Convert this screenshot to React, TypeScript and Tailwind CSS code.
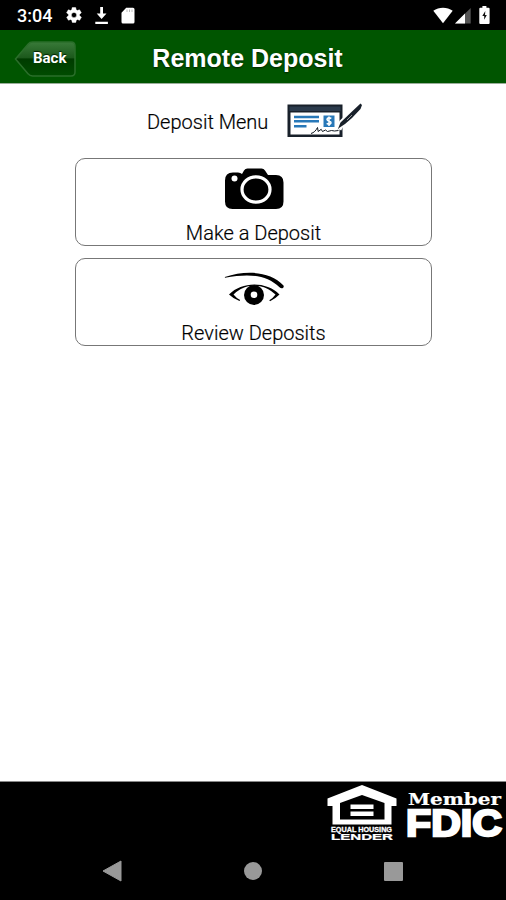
import type { ReactNode } from "react";

function StatusBar() {
  return (
    <div className="h-[30px] bg-black flex items-center text-white">
      <span className="ml-[17px] w-[48px] mt-[1px] font-['Roboto'] font-medium text-[18px] leading-none">3:04</span>
      {/* Settings */}
      <svg className="w-[18px] h-[18px]" viewBox="0 0 24 24" fill="#fff" stroke="#fff" strokeWidth=".6">
        <path d="M19.4 13c.04-.3.06-.65.06-1s-.02-.7-.07-1l2.1-1.6a.5.5 0 0 0 .1-.65l-2-3.45a.5.5 0 0 0-.6-.22l-2.5 1a7.4 7.4 0 0 0-1.7-.98l-.37-2.65a.5.5 0 0 0-.5-.42h-4a.5.5 0 0 0-.5.42l-.37 2.65c-.6.24-1.17.57-1.7.98l-2.5-1a.5.5 0 0 0-.6.22l-2 3.45a.5.5 0 0 0 .12.64L4.6 11a8 8 0 0 0 0 2l-2.1 1.6a.5.5 0 0 0-.12.65l2 3.45c.12.22.39.3.6.22l2.5-1c.52.4 1.08.74 1.7.98l.37 2.65c.04.24.25.42.5.42h4c.25 0 .46-.18.5-.42l.37-2.65a7.4 7.4 0 0 0 1.7-.98l2.5 1c.22.08.48 0 .6-.22l2-3.45a.5.5 0 0 0-.12-.64zM12 15.5a3.5 3.5 0 1 1 0-7 3.5 3.5 0 0 1 0 7z" />
      </svg>
      {/* Download */}
      <svg className="ml-[12px] mt-[2px] w-[14px] h-[18px]" viewBox="0 0 14 18" fill="#fff">
        <path d="M5.200 0h2.800v6.500h3.500L6.600 12 1.700 6.500h3.500zM.3 14.700h12.600v2.300H.3z" />
      </svg>
      {/* SD card */}
      <svg className="ml-[12px] mt-[1px] w-[14px] h-[17px]" viewBox="0 0 14 17">
        <path d="M5.200.8H12a1.500 1.500 0 0 1 1.500 1.500V15a1.500 1.500 0 0 1-1.500 1.500H2A1.500 1.500 0 0 1 .5 15V5.700z" fill="#fff" />
        <path d="M6 2.500v2.500M8.500 2.500v2.500M11 2.500v2.500" stroke="#aaa" strokeWidth=".8" />
      </svg>
      <div className="ml-auto mr-[16px] flex items-center">
        <svg className="w-[20px] h-[17px]" viewBox="0 0 20 17">
          <path d="M.3 3.700C6-.3 14-.3 19.700 3.700L10 16.300z" fill="#fff" />
        </svg>
        <svg className="ml-[2px] w-[16px] h-[17px]" viewBox="0 0 16 17">
          <path d="M0 16.500 15.700 1v15.500z" fill="#555" />
          <path d="M0 16.500 10 6.600v9.900z" fill="#fff" />
        </svg>
        <svg className="ml-[8px] w-[11px] h-[18px]" viewBox="0 0 11 18">
          <path d="M3.400 0h4v1.800h2.200q1 0 1 1V17q0 1-1 1H1.300q-1 0-1-1V2.800q0-1 1-1h2.100z" fill="#fff" />
          <path d="M6.300 5 3.300 10h1.900v3.800L7.800 9H6z" fill="#111" />
        </svg>
      </div>
    </div>
  );
}

function Header() {
  return (
    <header className="relative h-[54px] bg-[#005500] border-b border-b-[#9aae9a] flex items-center justify-center">
      {/* Arrow shaped back button */}
      <button className="absolute left-[14px] top-[11px] w-[63px] h-[37px]">
        <svg className="absolute inset-0" width="63" height="37" viewBox="0 0 63 37">
          <defs>
            <linearGradient id="gloss" x1="0" y1="0" x2="0" y2="1">
              <stop offset="0" stopColor="#397a39" />
              <stop offset=".46" stopColor="#1c591c" />
              <stop offset=".5" stopColor="#003b00" />
              <stop offset="1" stopColor="#004c00" />
            </linearGradient>
          </defs>
          <path d="M1.500 18 14 3.200Q15.800 1 18.500 1H57q4 0 4 4v26q0 4-4 4H18.500q-2.700 0-4.500-2.200z" fill="url(#gloss)" stroke="#2a6e2a" strokeWidth="1.500" />
        </svg>
        <span className="absolute left-[19px] top-[8px] font-['Roboto'] font-bold text-[15px] leading-[18px] text-white [text-shadow:0_-1px_1px_#002000]">
          Back
        </span>
      </button>
      <h1 className="mr-[11px] mt-[4px] font-['Liberation_Sans'] font-bold text-[25px] leading-none text-white whitespace-nowrap [text-shadow:0_1px_2px_#002000]">
        Remote Deposit
      </h1>
    </header>
  );
}

function CheckIcon() {
  return (
    <svg className="w-[76px] h-[36px]" viewBox="0 0 76 36">
      <path d="M.5 2.500h55V35H.5z" fill="#18202a" />
      <path d="M2.500 4.500h51v4.500h-51z" fill="#2b3a4c" />
      <path d="M3.500 10.500h49v22h-49z" fill="#fff" />
      <path d="M7 15h25M7 19.300h25M7 24.200h12.500" stroke="#2878b8" strokeWidth="2.500" />
      <path d="M36.500 13.500h11v11.500h-11z" fill="#2878b8" />
      <path d="M44.300 16.500q-2.300-1.500-3.800-.2c-1.300 1.400.2 2.300 1.500 2.700 1.700.5 2.800 1.700 1.300 2.900-1.200.8-2.500.3-3.600-.5M42 14.500v9.500" fill="none" stroke="#fff" strokeWidth="1.500" />
      <path d="M24 31.500c3-.8 5-3 6.500-6l.7 4 3-2.200 1.300 2.200 3-1.500 2 1.500 4-1 3 .5 4-.5" fill="none" stroke="#111820" strokeWidth="1" />
      <path d="M51.500 27 55 20.500 66 10" fill="none" stroke="#fff" strokeWidth="6" />
      <path d="m50.500 28 3-7.500L65 9.500l8.500-8L75 3l-1.500 4-8.500 9-7 6-6 4z" fill="#18202a" />
      <path d="m60 18 5-5" stroke="#ccc" strokeWidth=".7" />
    </svg>
  );
}

function CameraIcon() {
  return (
    <svg className="w-[60px] h-[42px]" viewBox="0 0 60 42">
      <path d="M9 4.500h5q2.500 0 4 1.500L20 2.500Q21.200.5 23.500.5h14q2.300 0 3.500 2l3 4.500h8q7.500 0 7.500 7.500v19q0 7.500-7.500 7.500H8.500Q1 41 1 33.500V12.500q0-8 8-8z" fill="#000" />
      <ellipse cx="32" cy="21.500" rx="14" ry="12.700" fill="none" stroke="#fff" strokeWidth="3.200" />
      <circle cx="10.500" cy="10.500" r="3" fill="#fff" />
    </svg>
  );
}

function EyeIcon() {
  return (
    <svg className="w-[60px] h-[34px]" viewBox="0 0 60 34">
      <path d="M.8 5C22-2 46-1 59.500 13.500q.8 2-1 2.700-1.700.4-3-.9C42 2.500 25 1.500 1 5.800z" fill="#000" />
      <path d="M5 22.500C18 9.500 42 9 55.500 22.500q-4.500 4.500-9.500 6.800l-.7-1q4-2.500 6.200-5.800-7.500-7-15.500-8.300-6-1-12 0Q16 16 9.500 22.500q3 3.800 6.700 5.500l-.7 1Q9 26.500 5 22.500z" fill="#000" />
      <circle cx="30" cy="23" r="10" fill="#000" />
      <circle cx="30" cy="22.800" r="3.300" fill="#fff" />
    </svg>
  );
}

function MenuButton({ label, children }: { label: string; children: ReactNode }) {
  return (
    <button className="w-[357px] h-[88px] border border-[#777] rounded-[10px] bg-white flex flex-col items-center justify-between">
      {children}
      <span className="font-['Roboto'] font-light text-[20px] leading-[24px] text-black [-webkit-text-stroke:0.2px_#000]">{label}</span>
    </button>
  );
}

function Footer() {
  return (
    <footer className="h-[119px] bg-black border-t border-t-[#888] flex flex-col">
      <div className="h-[60px] flex justify-end items-start">
        {/* Equal Housing Lender */}
        <div className="w-[72px] mt-[3px] mr-[8px] flex flex-col items-center text-white">
          <svg className="w-[72px] h-[40px]" viewBox="0 0 72 40">
            <path d="M36 0 70.500 13.500v7.500H65.500v18.500h-59V21H1.500v-7.500zM36 10 14 18v16.500h44.500V18z" fill="#fff" fillRule="evenodd" />
            <path d="M24.500 19.500h23V24h-23zM24.500 26.500h23v4.500h-23z" fill="#fff" />
          </svg>
          <svg className="w-[64px] h-[16px] overflow-visible" viewBox="0 0 64 16" fill="#fff" stroke="#fff" fontFamily="Liberation Sans, sans-serif" fontWeight="bold">
            <text x="1" y="7" fontSize="7" strokeWidth=".3" textLength="61" lengthAdjust="spacingAndGlyphs">EQUAL HOUSING</text>
            <text x="1" y="15" fontSize="8.500" strokeWidth=".2" textLength="62" lengthAdjust="spacingAndGlyphs">LENDER</text>
          </svg>
        </div>
        {/* Member FDIC */}
        <svg className="w-[100px] h-[60px] overflow-visible" viewBox="0 0 100 60" fill="#fff" stroke="#fff">
          <text x="2" y="22.500" fontSize="17" strokeWidth=".2" fontFamily="DejaVu Serif, serif" fontWeight="bold" textLength="93" lengthAdjust="spacingAndGlyphs">Member</text>
          <text x="0" y="54" fontSize="37.500" strokeWidth="2.400" fontFamily="Liberation Sans, sans-serif" fontWeight="bold" textLength="96" lengthAdjust="spacingAndGlyphs">FDIC</text>
        </svg>
      </div>
      {/* Android navigation */}
      <nav className="mt-[18px] px-[102px] flex items-center justify-between">
        <svg className="w-[20px] h-[22px]" viewBox="0 0 20 22">
          <path d="M1 11 19 1v20z" fill="#999" stroke="#999" strokeLinejoin="round" />
        </svg>
        <div className="w-[18px] h-[18px] rounded-full bg-[#999]" />
        <div className="w-[19px] h-[19px] mr-[1px] rounded-[1px] bg-[#999]" />
      </nav>
    </footer>
  );
}

export default function App() {
  return (
    <div className="w-[506px] h-[900px] bg-white flex flex-col overflow-hidden">
      <StatusBar />
      <Header />
      <main className="flex-1 flex flex-col items-center">
        <div className="w-full h-[74px] pl-[147px] pt-[18px] flex items-start">
          <span className="w-[140px] mt-[7px] font-['Roboto'] font-light text-[20px] leading-[26px] text-black whitespace-nowrap [-webkit-text-stroke:0.2px_#000]">
            Deposit Menu
          </span>
          <CheckIcon />
        </div>
        <div className="flex flex-col gap-[12px] ml-[1px]">
          <MenuButton label="Make a Deposit">
            <span className="mt-[9px]">
              <CameraIcon />
            </span>
          </MenuButton>
          <MenuButton label="Review Deposits">
            <span className="mt-[13px]">
              <EyeIcon />
            </span>
          </MenuButton>
        </div>
      </main>
      <Footer />
    </div>
  );
}
